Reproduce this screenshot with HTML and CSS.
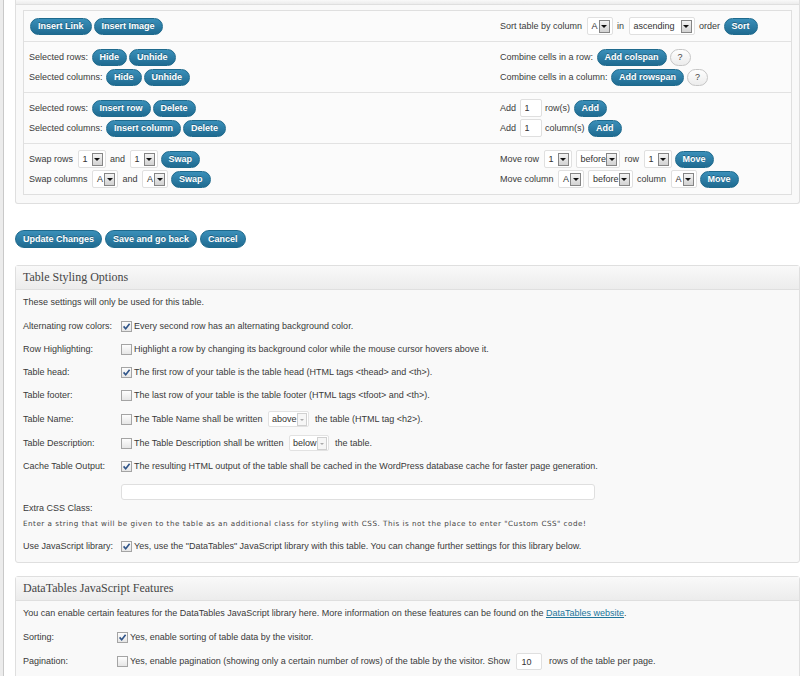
FILE: index.html
```html
<!DOCTYPE html>
<html>
<head>
  <title>Edit Table</title>
  <link rel="stylesheet" href="styles.css">
</head>
<body>
<div class="wrap">

  <!-- table manipulation box (header scrolled out of view) -->
  <div class="postbox postbox-cut">
    <div class="hndle"></div>
    <div class="inside">
      <div class="tools">
        <div class="tools-row">
          <div class="line"><button class="btn">Insert Link</button><button class="btn">Insert Image</button></div>
          <div class="line">Sort table by column <span class="sel"><span class="val">A</span><span class="arr"></span></span> in <span class="sel"><span class="val wide">ascending</span><span class="arr"></span></span> order <button class="btn">Sort</button></div>
        </div>
        <div class="tools-row">
          <div>
            <div class="line">Selected rows: <button class="btn">Hide</button><button class="btn">Unhide</button></div>
            <div class="line">Selected columns: <button class="btn">Hide</button><button class="btn">Unhide</button></div>
          </div>
          <div>
            <div class="line">Combine cells in a row: <button class="btn">Add colspan</button><button class="qbtn">?</button></div>
            <div class="line">Combine cells in a column: <button class="btn">Add rowspan</button><button class="qbtn">?</button></div>
          </div>
        </div>
        <div class="tools-row">
          <div>
            <div class="line">Selected rows: <button class="btn">Insert row</button><button class="btn">Delete</button></div>
            <div class="line">Selected columns: <button class="btn">Insert column</button><button class="btn">Delete</button></div>
          </div>
          <div>
            <div class="line">Add <input class="num" type="text" value="1"> row(s) <button class="btn">Add</button></div>
            <div class="line">Add <input class="num" type="text" value="1"> column(s) <button class="btn">Add</button></div>
          </div>
        </div>
        <div class="tools-row">
          <div>
            <div class="line">Swap rows <span class="sel"><span class="val num-val">1</span><span class="arr"></span></span> and <span class="sel"><span class="val num-val">1</span><span class="arr"></span></span> <button class="btn">Swap</button></div>
            <div class="line">Swap columns <span class="sel"><span class="val">A</span><span class="arr"></span></span> and <span class="sel"><span class="val">A</span><span class="arr"></span></span> <button class="btn">Swap</button></div>
          </div>
          <div>
            <div class="line">Move row <span class="sel"><span class="val num-val">1</span><span class="arr"></span></span> <span class="sel"><span class="val">before</span><span class="arr"></span></span> row <span class="sel"><span class="val num-val">1</span><span class="arr"></span></span> <button class="btn">Move</button></div>
            <div class="line">Move column <span class="sel"><span class="val">A</span><span class="arr"></span></span> <span class="sel"><span class="val">before</span><span class="arr"></span></span> column <span class="sel"><span class="val">A</span><span class="arr"></span></span> <button class="btn">Move</button></div>
          </div>
        </div>
      </div>
    </div>
  </div>

  <div class="submit-row">
    <button class="btn btn-lg">Update Changes</button>
    <button class="btn btn-lg">Save and go back</button>
    <button class="btn btn-lg">Cancel</button>
  </div>

  <div class="postbox">
    <div class="hndle">Table Styling Options</div>
    <div class="inside">
      <p class="intro">These settings will only be used for this table.</p>
      <div class="form-row">
        <div class="label">Alternating row colors:</div>
        <div class="value"><span class="cb"><svg viewBox="0 0 9 9"><path d="M1.6 4.4 L3.7 6.8 L7.6 1.8"/></svg></span>Every second row has an alternating background color.</div>
      </div>
      <div class="form-row">
        <div class="label">Row Highlighting:</div>
        <div class="value"><span class="cb"></span>Highlight a row by changing its background color while the mouse cursor hovers above it.</div>
      </div>
      <div class="form-row">
        <div class="label">Table head:</div>
        <div class="value"><span class="cb"><svg viewBox="0 0 9 9"><path d="M1.6 4.4 L3.7 6.8 L7.6 1.8"/></svg></span>The first row of your table is the table head (HTML tags &lt;thead&gt; and &lt;th&gt;).</div>
      </div>
      <div class="form-row">
        <div class="label">Table footer:</div>
        <div class="value"><span class="cb"></span>The last row of your table is the table footer (HTML tags &lt;tfoot&gt; and &lt;th&gt;).</div>
      </div>
      <div class="form-row form-row-sel">
        <div class="label">Table Name:</div>
        <div class="value"><span class="cb"></span>The Table Name shall be written <span class="sel sel-light"><span class="val">above</span><span class="arr"></span></span> the table (HTML tag &lt;h2&gt;).</div>
      </div>
      <div class="form-row form-row-sel">
        <div class="label">Table Description:</div>
        <div class="value"><span class="cb"></span>The Table Description shall be written <span class="sel sel-light"><span class="val">below</span><span class="arr"></span></span> the table.</div>
      </div>
      <div class="form-row">
        <div class="label">Cache Table Output:</div>
        <div class="value"><span class="cb"><svg viewBox="0 0 9 9"><path d="M1.6 4.4 L3.7 6.8 L7.6 1.8"/></svg></span>The resulting HTML output of the table shall be cached in the WordPress database cache for faster page generation.</div>
      </div>
      <div class="form-row extra-row">
        <input class="css-input" type="text" value="">
        <div class="label">Extra CSS Class:</div>
        <div class="description">Enter a string that will be given to the table as an additional class for styling with CSS. This is not the place to enter "Custom CSS" code!</div>
      </div>
      <div class="form-row">
        <div class="label">Use JavaScript library:</div>
        <div class="value"><span class="cb"><svg viewBox="0 0 9 9"><path d="M1.6 4.4 L3.7 6.8 L7.6 1.8"/></svg></span>Yes, use the "DataTables" JavaScript library with this table. You can change further settings for this library below.</div>
      </div>
    </div>
  </div>

  <div class="postbox datatables">
    <div class="hndle">DataTables JavaScript Features</div>
    <div class="inside">
      <p class="intro">You can enable certain features for the DataTables JavaScript library here. More information on these features can be found on the <a href="#">DataTables website</a>.</p>
      <div class="form-row">
        <div class="label">Sorting:</div>
        <div class="value"><span class="cb"><svg viewBox="0 0 9 9"><path d="M1.6 4.4 L3.7 6.8 L7.6 1.8"/></svg></span>Yes, enable sorting of table data by the visitor.</div>
      </div>
      <div class="form-row form-row-sel">
        <div class="label">Pagination:</div>
        <div class="value"><span class="cb"></span>Yes, enable pagination (showing only a certain number of rows) of the table by the visitor. Show <input class="num num-wide" type="text" value="10"> rows of the table per page.</div>
      </div>
    </div>
  </div>

</div>
</body>
</html>
```

FILE: styles.css
```css
html, body {
  overflow: hidden;
}
body {
  margin: 0;
  font-family: "Liberation Sans", Arial, sans-serif;
  font-size: 9px;
  color: #3a3a3a;
  background: linear-gradient(to right, #ececec 0, #ececec 3px, #c9c9c9 3px, #c9c9c9 4px, #fff 4px);
  min-height: 676px;
}
.wrap {
  padding-left: 15px;
}

/* postboxes */
.postbox {
  border: 1px solid #dfdfdf;
  border-radius: 3px;
  background: #f9f9f9;
}
.postbox-cut {
  border-top: none;
  border-radius: 0 0 3px 3px;
}
.hndle {
  height: 23px;
  line-height: 23px;
  padding-left: 7px;
  border-bottom: 1px solid #dfdfdf;
  background: linear-gradient(#f9f9f9, #ececec);
  font-family: "Liberation Serif", Georgia, serif;
  font-size: 12px;
  color: #464646;
}
.postbox-cut .hndle {
  height: 4px;
}
.inside {
  padding: 6px 7px 4px;
}
.postbox-cut .inside {
  padding: 5px 7px 8px;
}
.datatables {
  margin-top: 13px;
}

/* table tools */
.tools {
  border: 1px solid #dfdfdf;
  background: #fbfbfb;
}
.tools-row {
  display: grid;
  grid-template-columns: 471px 1fr;
  padding: 5px;
  border-bottom: 1px solid #e2e2e2;
}
.tools-row:last-child {
  border-bottom: none;
}
.line {
  display: flex;
  align-items: center;
  height: 20px;
  white-space: pre;
}
.line .btn {
  margin: 0 1px;
}
.line .sel {
  margin: 0 2px;
}

/* buttons */
.btn {
  height: 17px;
  padding: 0 7px;
  border: 1px solid #1e6a8d;
  border-radius: 9px;
  background: linear-gradient(#3a8fb9, #1f6b91);
  color: #fff;
  font-family: "Liberation Sans", Arial, sans-serif;
  font-size: 9px;
  font-weight: bold;
  line-height: 15px;
  text-shadow: 0 -1px 0 rgba(0,0,0,0.3);
  cursor: pointer;
}
.btn-lg {
  height: 18px;
}
.qbtn {
  width: 21px;
  height: 17px;
  margin-left: 2px;
  padding: 0;
  border: 1px solid #c6c6c6;
  border-radius: 9px;
  background: linear-gradient(#fefefe, #ececec);
  color: #444;
  font-family: "Liberation Sans", Arial, sans-serif;
  font-size: 9px;
}
.submit-row {
  display: flex;
  gap: 3px;
  margin: 26px 0 17px;
}

/* fake selects and inputs */
.sel {
  display: inline-flex;
  align-items: center;
  box-sizing: border-box;
  height: 18px;
  padding: 0 2px 0 4px;
  border: 1px solid #e0e0e0;
  border-radius: 2px;
  background: #fff;
  color: #333;
}
.sel .val {
  min-width: 7px;
}
.sel .num-val {
  min-width: 9px;
}
.sel .wide {
  min-width: 47px;
}
.arr {
  display: flex;
  align-items: center;
  justify-content: center;
  width: 9px;
  height: 11px;
  border: 1px solid #858585;
  background: linear-gradient(#f4f4f4, #d2d2d2);
}
.arr::after {
  content: "";
  border-left: 3px solid transparent;
  border-right: 3px solid transparent;
  border-top: 3px solid #111;
  margin-top: 1px;
}
.sel-light {
  height: 16px;
  margin: 0 3px;
  padding: 0 1px 0 3px;
  border-color: #e2e2e2;
}
.sel-light .arr {
  width: 8px;
  border-color: #d0d0d0;
  background: #f6f6f6;
  margin-left: 1px;
}
.sel-light .arr::after {
  border-top-color: #aaa;
  border-left-width: 2px;
  border-right-width: 2px;
  border-top-width: 2px;
}
.num {
  box-sizing: border-box;
  width: 22px;
  height: 18px;
  margin: 0 1px;
  padding: 0 0 0 4px;
  border: 1px solid #dfdfdf;
  border-radius: 2px;
  background: #fff;
  color: #333;
  font-family: "Liberation Sans", Arial, sans-serif;
  font-size: 9px;
}
.num-wide {
  width: 26px;
  height: 17px;
  margin: 0 4px;
}

/* form rows */
.intro {
  margin: 0 0 6px;
  line-height: 13px;
}
.intro a {
  color: #21759b;
}
.form-row {
  display: grid;
  grid-template-columns: 98px 1fr;
  align-items: center;
  padding: 5px 0;
  line-height: 13px;
}
.form-row-sel {
  padding: 4px 0;
}
.datatables .form-row {
  grid-template-columns: 94px 1fr;
}
.value {
  display: flex;
  align-items: center;
  white-space: pre;
}
.cb {
  box-sizing: border-box;
  width: 11px;
  height: 11px;
  margin-right: 2px;
  border: 1px solid #a4a4a4;
  background: linear-gradient(#fdfdfd, #e6e6e6);
  flex-shrink: 0;
}
.cb svg {
  display: block;
  width: 9px;
  height: 9px;
  fill: none;
  stroke: #2f5489;
  stroke-width: 1.6;
}
.extra-row {
  padding: 6px 0 5px;
  row-gap: 2px;
}
.css-input {
  grid-column: 2;
  grid-row: 1;
  box-sizing: border-box;
  width: 474px;
  height: 16px;
  border: 1px solid #dfdfdf;
  border-radius: 3px;
  background: #fff;
}
.extra-row .label {
  grid-column: 1;
  grid-row: 2;
  white-space: nowrap;
}
.description {
  grid-column: 1 / 3;
  grid-row: 3;
  font-family: "DejaVu Sans", Verdana, sans-serif;
  font-size: 7.2px;
  letter-spacing: 0.5px;
  color: #444;
}
```
